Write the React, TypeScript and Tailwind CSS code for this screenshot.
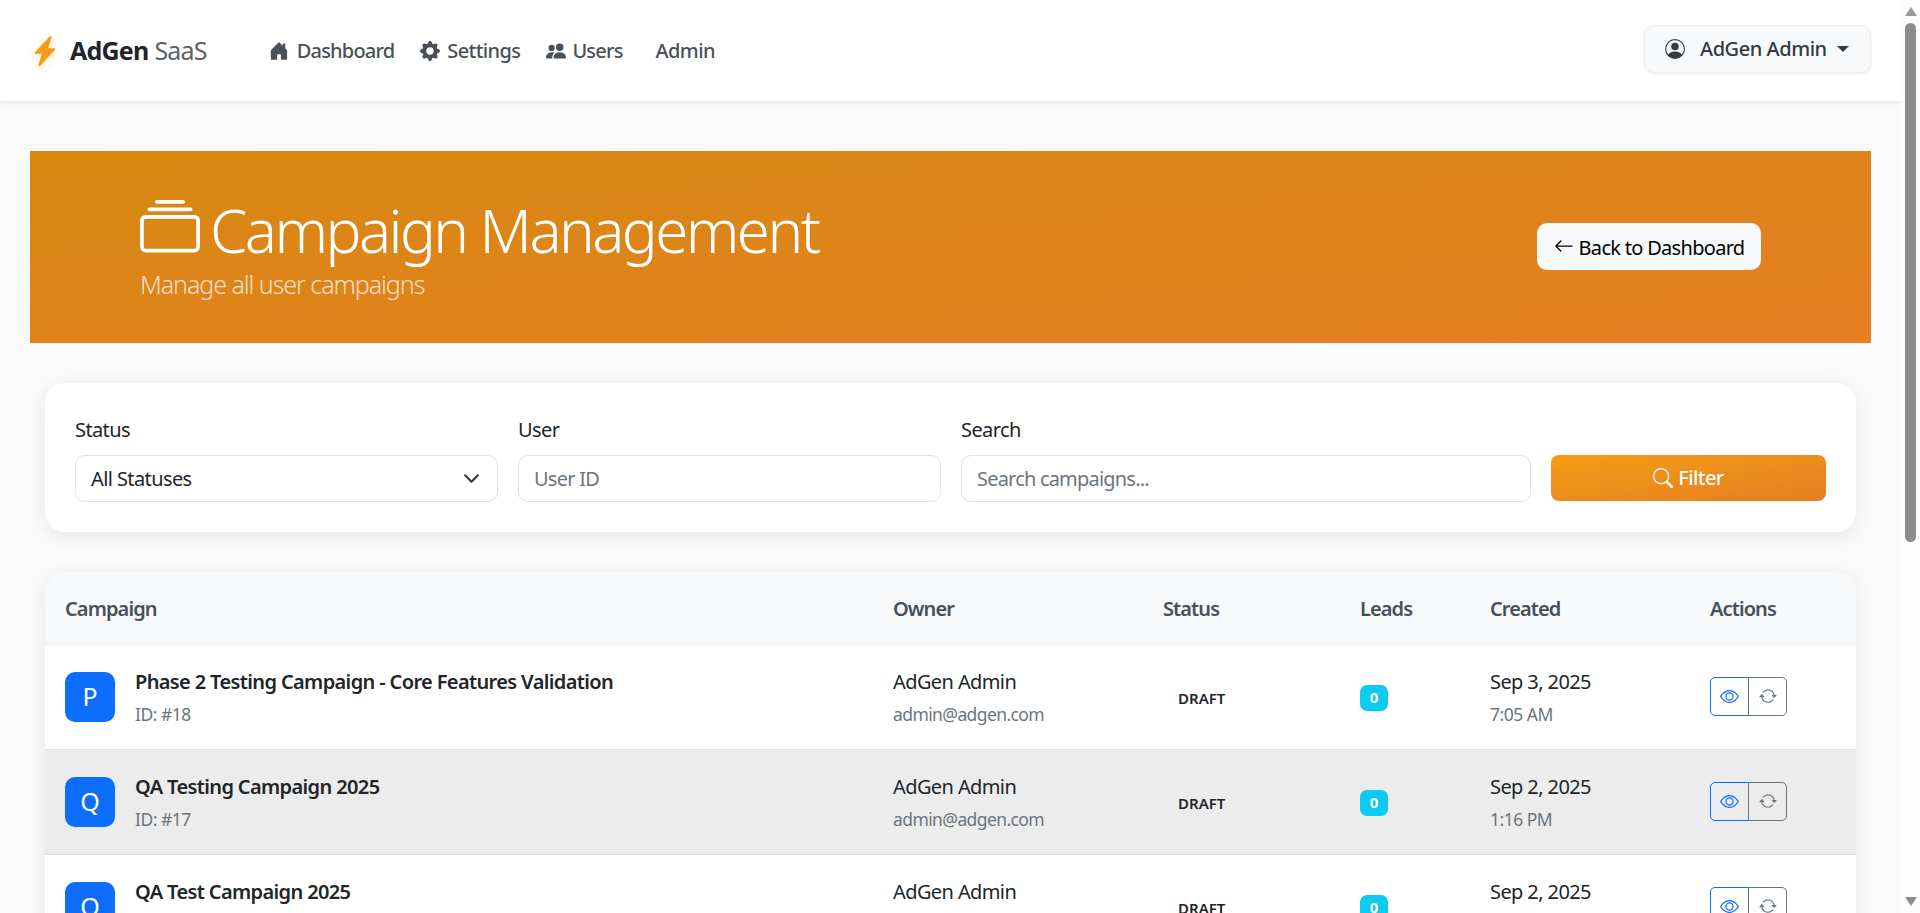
import React from "react";
import { BsArrowLeft, BsArrowRepeat, BsCollection, BsEye, BsGearFill, BsHouseDoorFill, BsLightningChargeFill, BsPeopleFill, BsPersonCircle, BsSearch } from "react-icons/bs";

const rows = [
  { letter: "P", name: "Phase 2 Testing Campaign - Core Features Validation", id: "ID: #18", date: "Sep 3, 2025", time: "7:05 AM", bg: "bg-white" },
  { letter: "Q", name: "QA Testing Campaign 2025", id: "ID: #17", date: "Sep 2, 2025", time: "1:16 PM", bg: "bg-[#ececec]" },
  { letter: "Q", name: "QA Test Campaign 2025", id: "ID: #16", date: "Sep 2, 2025", time: "1:10 PM", bg: "bg-white" },
];

const gridCols = "grid grid-cols-[828px_270px_197px_130px_220px_166px]";

export default function App() {
  return (
    <div className="flex h-[913px] w-full overflow-hidden bg-[#fafafa] font-['Noto_Sans',sans-serif] text-[20px] text-[#212529]">
      <main className="min-w-0 flex-1 overflow-hidden">
        <nav className="flex h-[101px] items-center justify-between bg-white pl-[35px] pr-[30px] shadow-[0_2px_4px_rgba(0,0,0,0.08)]">
          <div className="flex items-center">
            <BsLightningChargeFill className="h-[30px] w-[30px] -ml-[5px] text-[#f39c12] drop-shadow-[0_2px_4px_rgba(243,156,18,0.3)]" />
            <span className="ml-[10px] text-[25px] font-bold tracking-[-0.8px] text-[#212529]">AdGen</span>
            <span className="ml-[6px] text-[25px] tracking-[-0.8px] text-[#5c636a]">SaaS</span>
            <div className="ml-[62px] flex items-center font-medium text-[#495057]">
              <BsHouseDoorFill className="h-[20px] w-[20px]" />
              <span className="ml-[8px] tracking-[-0.8px]">Dashboard</span>
              <BsGearFill className="ml-[26px] h-[20px] w-[20px]" />
              <span className="ml-[7px] tracking-[-0.6px]">Settings</span>
              <BsPeopleFill className="ml-[26px] h-[20px] w-[20px]" />
              <span className="ml-[6px] tracking-[-0.8px]">Users</span>
              <span className="ml-[33px] tracking-[-0.6px]">Admin</span>
            </div>
          </div>
          <button className="mb-[3px] flex h-[48px] w-[227px] items-center rounded-[10px] border border-[#eeeeee] bg-[#f8f9fa] pl-[20px] font-medium text-[#343a40] shadow-[0_1px_3px_rgba(0,0,0,0.08)]">
            <BsPersonCircle className="h-[20px] w-[20px] shrink-0" />
            <span className="ml-[15px] tracking-[-0.45px]">AdGen Admin</span>
            <span className="ml-[10px] h-0 w-0 border-x-[6px] border-t-[6px] border-x-transparent border-t-[#343a40]" />
          </button>
        </nav>

        <section className="mx-[30px] mt-[50px] flex h-[192px] items-center justify-between bg-gradient-to-br from-[#d68910] to-[#e67e22] px-[110px] text-white">
          <div>
            <h1 className="flex items-center text-[60px] font-light leading-[72px] tracking-[-2.55px]">
              <BsCollection className="h-[60px] w-[60px] shrink-0" />
              <span className="ml-[10px] pt-[3px]">Campaign Management</span>
            </h1>
            <p className="text-[25px] font-light tracking-[-1.05px] text-white/75">Manage all user campaigns</p>
          </div>
          <button className="mb-[2px] flex h-[47px] w-[224px] items-center justify-center rounded-[10px] bg-[#f8f9fa] text-[#000000]">
            <BsArrowLeft className="h-[20px] w-[20px] shrink-0" />
            <span className="ml-[5px] pt-[4px] tracking-[-0.7px]">Back to Dashboard</span>
          </button>
        </section>

        <section className="mx-[45px] mt-[40px] rounded-[20px] bg-white px-[30px] pb-[30px] pt-[30px] shadow-[0_4px_20px_rgba(0,0,0,0.08)]">
          <div className="grid grid-cols-[423px_423px_570px_275px] items-end gap-x-[20px]">
            <label className="block">
              <span className="mb-[10px] block pt-[2px] leading-[30px] tracking-[-0.6px]">Status</span>
              <div className="flex h-[47px] items-center justify-between rounded-[10px] border border-[#dee2e6] bg-white pl-[15px] pr-[17px]">
                <span className="tracking-[-0.6px]">All Statuses</span>
                <svg viewBox="0 0 16 16" className="h-[17px] w-[17px]" fill="none" stroke="#343a40" strokeWidth="2" strokeLinecap="round" strokeLinejoin="round"><path d="m2 5 6 6 6-6" /></svg>
              </div>
            </label>
            <label className="block">
              <span className="mb-[10px] block pt-[2px] leading-[30px] tracking-[-0.6px]">User</span>
              <input placeholder="User ID" className="h-[47px] w-full rounded-[10px] border border-[#dee2e6] bg-white px-[15px] tracking-[-0.75px] outline-none placeholder:text-[#6c757d]" />
            </label>
            <label className="block">
              <span className="mb-[10px] block pt-[2px] leading-[30px] tracking-[-0.6px]">Search</span>
              <input placeholder="Search campaigns..." className="h-[47px] w-full rounded-[10px] border border-[#dee2e6] bg-white px-[15px] tracking-[-0.8px] outline-none placeholder:text-[#6c757d]" />
            </label>
            <button className="mb-[1px] flex h-[46px] items-center justify-center rounded-[8px] bg-gradient-to-br from-[#f39c12] to-[#e67e22] font-medium text-white">
              <BsSearch className="h-[20px] w-[20px]" />
              <span className="ml-[5px] tracking-[-0.6px]">Filter</span>
            </button>
          </div>
        </section>

        <section className="mx-[45px] mt-[40px] overflow-hidden rounded-t-[20px] shadow-[0_4px_20px_rgba(0,0,0,0.08)]">
          <div className={`${gridCols} h-[73px] items-center border-b border-[#eeeeee] bg-[#f8f9fa] font-semibold text-[#495057]`}>
            {["Campaign", "Owner", "Status", "Leads", "Created", "Actions"].map((h) => (
              <div key={h} className="pl-[20px] pt-[2px] tracking-[-0.9px]">{h}</div>
            ))}
          </div>
          {rows.map((r, i) => (
            <div key={i} className={`${gridCols} h-[105px] items-center border-b border-[#dee2e6] ${r.bg}`}>
              <div className="flex items-center pl-[20px]">
                <div className="flex h-[50px] w-[50px] shrink-0 items-center justify-center rounded-[10px] bg-[#0d6efd] text-[25px] text-white">{r.letter}</div>
                <div className="ml-[20px] pb-[1px]">
                  <div className="font-semibold leading-[30px] tracking-[-0.63px]">{r.name}</div>
                  <div className="mt-[4px] text-[17.5px] leading-[26px] tracking-[-0.5px] text-[#6c757d]">{r.id}</div>
                </div>
              </div>
              <div className="pb-[1px] pl-[20px]">
                <div className="leading-[30px] tracking-[-0.6px]">AdGen Admin</div>
                <div className="mt-[4px] text-[17.5px] leading-[26px] tracking-[-0.6px] text-[#6c757d]">admin@adgen.com</div>
              </div>
              <div className="pl-[35px] pt-[3px] text-[15px] font-semibold tracking-[0px]">DRAFT</div>
              <div className="pl-[20px] pt-[1px]">
                <span className="flex h-[26px] w-[28px] items-center justify-center rounded-[7px] bg-[#0dcaf0] text-[15px] font-bold text-white">0</span>
              </div>
              <div className="pb-[1px] pl-[20px]">
                <div className="leading-[30px] tracking-[-0.6px]">{r.date}</div>
                <div className="mt-[4px] text-[17.5px] leading-[26px] tracking-[-0.5px] text-[#6c757d]">{r.time}</div>
              </div>
              <div className="pb-[2px] pl-[20px]">
                <div className="flex h-[39px] w-[77px]">
                  <button className="flex w-[39px] items-center justify-center rounded-l-[5px] border border-[#0d6efd] text-[#0d6efd]"><BsEye className="h-[19px] w-[19px]" /></button>
                  <button className="-ml-px flex w-[39px] items-center justify-center rounded-r-[5px] border border-[#6c757d] text-[#6c757d]"><BsArrowRepeat className="h-[18px] w-[18px]" /></button>
                </div>
              </div>
            </div>
          ))}
        </section>
      </main>

      <aside className="flex w-[19px] shrink-0 flex-col items-center bg-[#fdfdfd]">
        <span className="mt-[7px] h-0 w-0 border-x-[6px] border-b-[9px] border-x-transparent border-b-[#9a9a9a]" />
        <span className="mt-[7px] h-[519px] w-[11px] rounded-full bg-[#8c8c8c]" />
        <span className="mb-[7px] mt-auto h-0 w-0 border-x-[6px] border-t-[9px] border-x-transparent border-t-[#8c8c8c]" />
      </aside>
    </div>
  );
}
